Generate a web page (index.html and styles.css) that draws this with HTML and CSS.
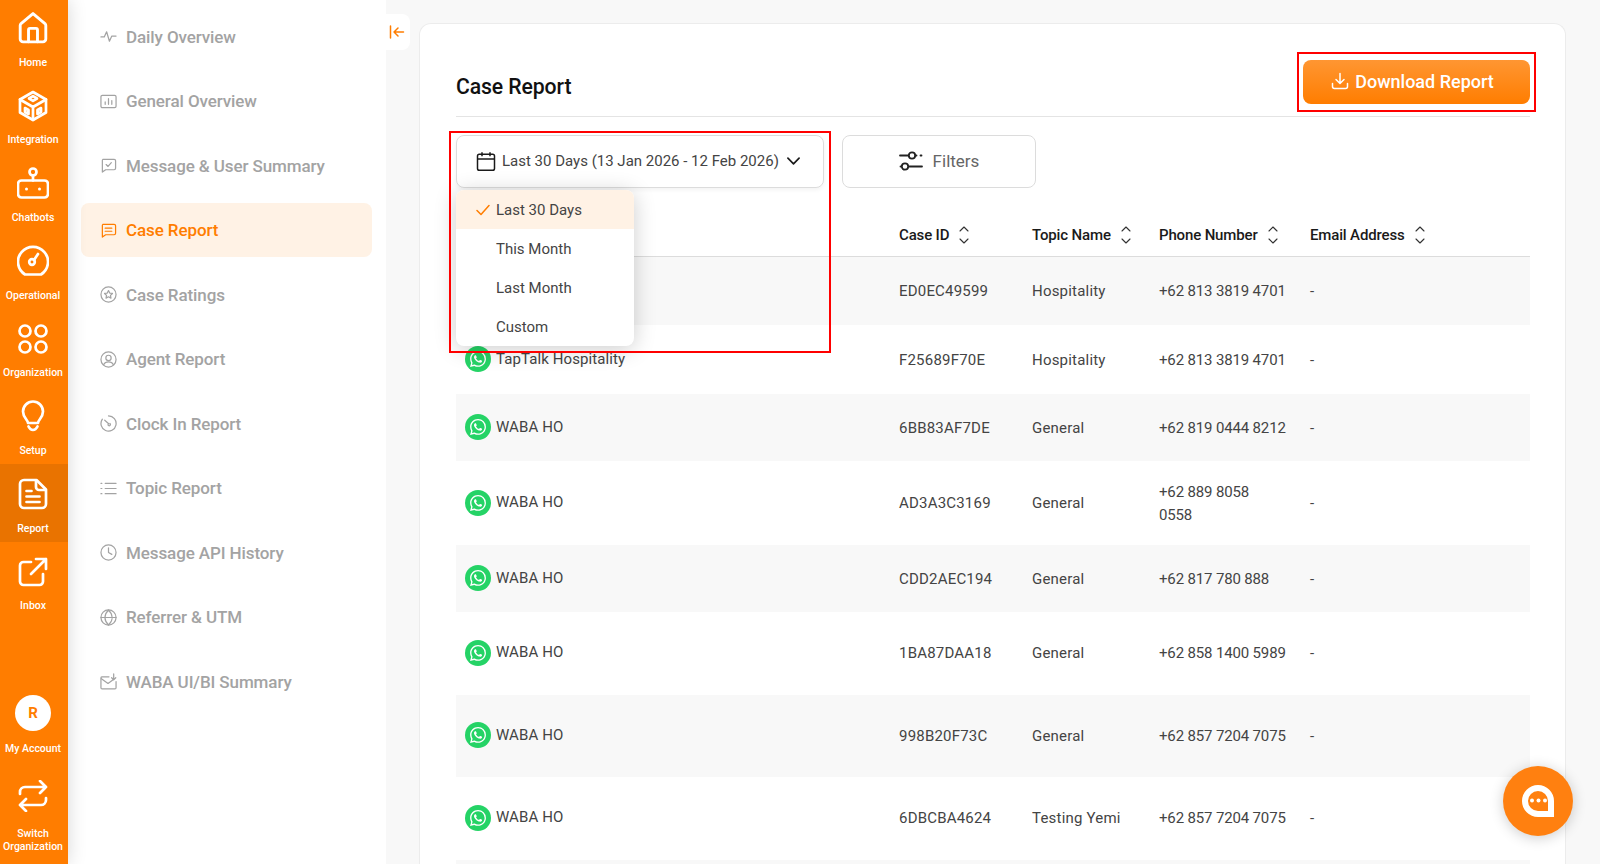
FILE: index.html
```html
<!DOCTYPE html>
<html lang="en">
<head>
<meta charset="utf-8">
<title>Case Report</title>
<link rel="stylesheet" href="styles.css">
</head>
<body>
<svg class="defs" width="0" height="0" aria-hidden="true">
  <defs>
    <symbol id="wa" viewBox="0 0 24 24"><path d="M17.472 14.382c-.297-.149-1.758-.867-2.03-.967-.273-.099-.471-.148-.67.15-.197.297-.767.966-.94 1.164-.173.199-.347.223-.644.075-.297-.15-1.255-.463-2.39-1.475-.883-.788-1.48-1.761-1.653-2.059-.173-.297-.018-.458.13-.606.134-.133.298-.347.446-.52.149-.174.198-.298.298-.497.099-.198.05-.371-.025-.52-.075-.149-.669-1.612-.916-2.207-.242-.579-.487-.5-.669-.51-.173-.008-.371-.01-.57-.01-.198 0-.52.074-.792.372-.272.297-1.04 1.016-1.04 2.479 0 1.462 1.065 2.875 1.213 3.074.149.198 2.096 3.2 5.077 4.487.709.306 1.262.489 1.694.625.712.227 1.36.195 1.871.118.571-.085 1.758-.719 2.006-1.413.248-.694.248-1.289.173-1.413-.074-.124-.272-.198-.57-.347m-5.421 7.403h-.004a9.87 9.87 0 01-5.031-1.378l-.361-.214-3.741.982.998-3.648-.235-.374a9.86 9.86 0 01-1.51-5.26c.001-5.45 4.436-9.884 9.888-9.884 2.64 0 5.122 1.03 6.988 2.898a9.825 9.825 0 012.893 6.994c-.003 5.45-4.437 9.884-9.885 9.884m8.413-18.297A11.815 11.815 0 0012.05 0C5.495 0 .16 5.335.157 11.892c0 2.096.547 4.142 1.588 5.945L.057 24l6.305-1.654a11.882 11.882 0 005.683 1.448h.005c6.554 0 11.89-5.335 11.893-11.893a11.821 11.821 0 00-3.48-8.413z"/></symbol>
    <symbol id="sort" viewBox="0 0 10 20"><path d="M1 6l4-4 4 4M1 14l4 4 4-4"/></symbol>
  </defs>
</svg>

<nav class="rail">
  <div class="rail-top">
    <a class="rail-item"><svg class="rail-icon" viewBox="2 1 28 30"><path d="M4.800 11.800 16 2.500l11.200 9.300c.5.500.8 1.200.8 1.900v12.600c0 1.500-1.200 2.700-2.700 2.700H6.700C5.200 29 4 27.800 4 26.300V13.700c0-.7.300-1.400.8-1.900Z"/><path d="M11.800 29V17.800c0-.8.600-1.400 1.400-1.400h5.600c.8 0 1.400.6 1.400 1.400V29"/></svg><span class="rail-label">Home</span></a>
    <a class="rail-item"><svg class="rail-icon" viewBox="0 0 32 32"><path d="M16 2 29 9.500v13L16 30 3 22.500v-13Z"/><path d="m12 8.500 4-2.300 4 2.300-4 2.300Zm-9 1L16 17l13-7.500M16 17v13M8 18l3.500 2v4l-3.500-2Zm16 0-3.500 2v4l3.500-2Z"/></svg><span class="rail-label">Integration</span></a>
    <a class="rail-item"><svg class="rail-icon" viewBox="0 0 32 32"><circle cx="16" cy="5" r="3.500"/><path d="M16 8.500v5"/><rect x="1" y="13.500" width="30" height="17" rx="3.500"/><circle class="solid" cx="9.500" cy="22" r="1.500"/><circle class="solid" cx="22.500" cy="22" r="1.500"/></svg><span class="rail-label">Chatbots</span></a>
    <a class="rail-item"><svg class="rail-icon" viewBox="0 0 32 32"><path d="M8 29.500a15 15 0 1 1 16 0Z"/><circle cx="15" cy="17" r="2.800"/><path d="m17 15 4-6"/></svg><span class="rail-label">Operational</span></a>
    <a class="rail-item"><svg class="rail-icon" viewBox="0 0 32 32"><circle cx="8" cy="8" r="5.500"/><circle cx="24" cy="8" r="5.500"/><circle cx="8" cy="24" r="5.500"/><circle cx="24" cy="24" r="5.500"/></svg><span class="rail-label">Organization</span></a>
    <a class="rail-item"><svg class="rail-icon" viewBox="0 0 32 32"><path d="M11 23c0-3-5-5.500-5-11.500a10 10 0 0 1 20 0C26 17.500 21 20 21 23Z"/><path d="M11.500 26.500c1 2 2.500 3.500 4.500 3.500s3.500-1.500 4.500-3.500"/></svg><span class="rail-label">Setup</span></a>
    <a class="rail-item is-current"><svg class="rail-icon" viewBox="0 0 32 32"><path d="M7 2h12.500L29 11.500V26a4 4 0 0 1-4 4H7a4 4 0 0 1-4-4V6a4 4 0 0 1 4-4Z"/><path d="M19 3v6a3 3 0 0 0 3 3h6M9.500 13h5M9.500 18.500h13M9.500 24h13"/></svg><span class="rail-label">Report</span></a>
    <a class="rail-item"><svg class="rail-icon" viewBox="0 0 32 32"><path d="M14 6H6.500A3.500 3.500 0 0 0 3 9.500v16A3.500 3.500 0 0 0 6.500 29h16a3.500 3.500 0 0 0 3.500-3.500V18"/><path d="M14 18 29 3M19 3h10v10"/></svg><span class="rail-label">Inbox</span></a>
  </div>
  <div class="rail-bottom">
    <a class="rail-account"><span class="avatar">R</span><span class="rail-label">My Account</span></a>
    <a class="rail-switch"><svg class="rail-icon" viewBox="0 0 32 32"><path d="M3 14v-2a5 5 0 0 1 5-5h21M23 1l6 6-6 6M29 18v2a5 5 0 0 1-5 5H3M9 31l-6-6 6-6"/></svg><span class="rail-label">Switch<br>Organization</span></a>
  </div>
</nav>

<aside class="panel">
  <button class="panel-toggle" aria-label="Collapse"><svg viewBox="0 0 16 16"><path d="M1.500 2v12M14.500 8H5M9 4 5 8l4 4"/></svg></button>
  <a class="menu-item"><svg class="menu-icon" viewBox="0 0 18 18"><path d="M1 9.500h3.500L7 4l3 10 2.500-5.500H17"/></svg>Daily Overview</a>
  <a class="menu-item"><svg class="menu-icon" viewBox="0 0 18 18"><rect x="1" y="2.500" width="16" height="13" rx="1.500"/><path d="M5.500 12V9.500M9 12V6M12.500 12V8"/></svg>General Overview</a>
  <a class="menu-item"><svg class="menu-icon" viewBox="0 0 18 18"><path d="M3 2.500h12a1.500 1.500 0 0 1 1.500 1.500v8a1.500 1.500 0 0 1-1.500 1.500H6L2.500 16V4A1.500 1.500 0 0 1 3 2.500Z"/><path d="m6.500 8 2 2 3.500-4"/></svg>Message &amp; User Summary</a>
  <a class="menu-item is-active"><svg class="menu-icon" viewBox="0 0 18 18"><path d="M3 2.500h12a1.500 1.500 0 0 1 1.500 1.500v8a1.500 1.500 0 0 1-1.500 1.500H6L2.500 16V4A1.500 1.500 0 0 1 3 2.500Z"/><path d="M5.500 6.500h7M5.500 9.800h7"/></svg>Case Report</a>
  <a class="menu-item"><svg class="menu-icon" viewBox="0 0 18 18"><circle cx="9" cy="9" r="8"/><path d="m9 4.800 1.300 2.700 2.900.4-2.100 2 .5 2.900L9 11.400l-2.600 1.400.5-2.900-2.100-2 2.900-.4Z"/></svg>Case Ratings</a>
  <a class="menu-item"><svg class="menu-icon" viewBox="0 0 18 18"><circle cx="9" cy="9" r="8"/><circle cx="9" cy="7.300" r="2.800"/><path d="M3.800 14.500c1-2 3-3 5.200-3s4.200 1 5.200 3"/></svg>Agent Report</a>
  <a class="menu-item"><svg class="menu-icon" viewBox="0 0 18 18"><path d="M9 1a8 8 0 1 1-6.500 3.400"/><path d="m5 5.500 4.500 4"/><path d="M10.500 9a1.300 1.300 0 1 1-2 .8"/></svg>Clock In Report</a>
  <a class="menu-item"><svg class="menu-icon" viewBox="0 0 18 18"><path d="M5.500 3.500H17M5.500 9H17M5.500 14.500H17M1 3.500h1M1 9h1M1 14.500h1"/></svg>Topic Report</a>
  <a class="menu-item"><svg class="menu-icon" viewBox="0 0 18 18"><circle cx="9" cy="9" r="8"/><path d="M9 4v5l3.500 2"/></svg>Message API History</a>
  <a class="menu-item"><svg class="menu-icon" viewBox="0 0 18 18"><circle cx="9" cy="9" r="8"/><path d="M1 9h16M9 1c-5 5-5 11 0 16M9 1c5 5 5 11 0 16"/></svg>Referrer &amp; UTM</a>
  <a class="menu-item"><svg class="menu-icon" viewBox="0 0 18 18"><path d="M9.500 4H2a1.200 1.200 0 0 0-1 1.200V15.500A1.200 1.200 0 0 0 2.200 16.700h13.600a1.200 1.200 0 0 0 1.200-1.200V9"/><path d="m1.500 6 7 5 5-3.500M14.500 1v6M12.300 5l2.200 2.200L16.700 5"/></svg>WABA UI/BI Summary</a>
</aside>

<main class="main">
  <section class="card">
    <header class="card-head">
      <h1 class="card-title">Case Report</h1>
      <div class="marked marked-btn">
        <button class="btn-download"><svg class="btn-icon" viewBox="0 0 18 18"><path d="M9 1.500v9.500M5 7.500 9 11.500l4-4M1.500 11.500v3a2 2 0 0 0 2 2h11a2 2 0 0 0 2-2v-3"/></svg>Download Report</button>
      </div>
    </header>

    <div class="filters">
      <div class="date-wrap">
        <button class="date-btn"><svg class="date-icon" viewBox="0 0 20 20"><rect x="1.500" y="2.800" width="17" height="16" rx="1.800"/><path d="M1.500 7.500h17M6 .8v4M14 .8v4"/></svg>Last 30 Days (13 Jan 2026 - 12 Feb 2026)<svg class="date-caret" viewBox="0 0 14 8"><path d="m1 1 6 6 6-6"/></svg></button>
        <ul class="dropdown">
          <li class="dd-item is-selected"><svg class="dd-check" viewBox="0 0 14 12"><path d="m1 6.500 4 4 8-9"/></svg>Last 30 Days</li>
          <li class="dd-item">This Month</li>
          <li class="dd-item">Last Month</li>
          <li class="dd-item">Custom</li>
        </ul>
        <span class="marked-box"></span>
      </div>
      <button class="filter-btn"><svg class="filter-icon" viewBox="0 0 24 22"><path d="M1 5.500h8.500M16.500 5.500h1M21.500 5.500h1M1.500 16.500h0M10 16.500h13"/><circle cx="13" cy="5.500" r="3.200"/><circle cx="6" cy="16.500" r="3.200"/></svg>Filters</button>
    </div>

    <table class="table">
      <colgroup><col class="c-name"><col class="c-case"><col class="c-topic"><col class="c-phone"><col class="c-email"></colgroup>
      <thead>
        <tr>
          <th></th>
          <th><span class="th-in">Case ID<svg class="sort"><use href="#sort"/></svg></span></th>
          <th><span class="th-in">Topic Name<svg class="sort"><use href="#sort"/></svg></span></th>
          <th><span class="th-in">Phone Number<svg class="sort"><use href="#sort"/></svg></span></th>
          <th><span class="th-in">Email Address<svg class="sort"><use href="#sort"/></svg></span></th>
        </tr>
      </thead>
      <tbody>
        <tr class="r-a alt"><td></td><td>ED0EC49599</td><td>Hospitality</td><td>+62 813 3819 4701</td><td>-</td></tr>
        <tr class="r-b"><td><div class="chan"><span class="wa"><svg><use href="#wa"/></svg></span><span>TapTalk Hospitality</span></div></td><td>F25689F70E</td><td>Hospitality</td><td>+62 813 3819 4701</td><td>-</td></tr>
        <tr class="r-c alt"><td><div class="chan"><span class="wa"><svg><use href="#wa"/></svg></span><span>WABA HO</span></div></td><td>6BB83AF7DE</td><td>General</td><td>+62 819 0444 8212</td><td>-</td></tr>
        <tr class="r-d"><td><div class="chan"><span class="wa"><svg><use href="#wa"/></svg></span><span>WABA HO</span></div></td><td>AD3A3C3169</td><td>General</td><td>+62 889 8058<br>0558</td><td>-</td></tr>
        <tr class="r-c alt"><td><div class="chan"><span class="wa"><svg><use href="#wa"/></svg></span><span>WABA HO</span></div></td><td>CDD2AEC194</td><td>General</td><td>+62 817 780 888</td><td>-</td></tr>
        <tr class="r-e"><td><div class="chan"><span class="wa"><svg><use href="#wa"/></svg></span><span>WABA HO</span></div></td><td>1BA87DAA18</td><td>General</td><td>+62 858 1400 5989</td><td>-</td></tr>
        <tr class="r-e alt"><td><div class="chan"><span class="wa"><svg><use href="#wa"/></svg></span><span>WABA HO</span></div></td><td>998B20F73C</td><td>General</td><td>+62 857 7204 7075</td><td>-</td></tr>
        <tr class="r-e"><td><div class="chan"><span class="wa"><svg><use href="#wa"/></svg></span><span>WABA HO</span></div></td><td>6DBCBA4624</td><td>Testing Yemi</td><td>+62 857 7204 7075</td><td>-</td></tr>
        <tr class="r-e alt"><td></td><td></td><td></td><td></td><td></td></tr>
      </tbody>
    </table>
  </section>
</main>

<button class="fab" aria-label="Chat"><svg viewBox="0 0 34 34"><path fill-rule="evenodd" d="M17 1a16 16 0 0 1 16 16v16H17A16 16 0 0 1 17 1Zm0 6a10 10 0 0 0 0 20h10V17A10 10 0 0 0 17 7Z"/><circle cx="11" cy="16.500" r="2"/><circle cx="17.500" cy="16.500" r="2"/><circle cx="24" cy="16.500" r="2"/></svg></button>
</body>
</html>
```
FILE: styles.css
```css
* { box-sizing: border-box; }
html, body { height: 100%; }
body {
  margin: 0;
  display: flex;
  height: 864px;
  overflow: hidden;
  background: #f8f8f8;
  font-family: Roboto, "Liberation Sans", sans-serif;
  color: #1f1f1f;
}
button { font-family: inherit; cursor: pointer; }
.defs { position: absolute; }

/* primary rail */
.rail {
  flex: 0 0 68px;
  height: 864px;
  background: #ff7d00;
  display: flex;
  flex-direction: column;
  justify-content: space-between;
  box-shadow: 0 0 18px rgba(0, 0, 0, .16);
  z-index: 3;
  color: #fff;
}
.rail-top { margin-top: -2px; }
.rail-item {
  height: 77.7px;
  padding: 14px 2px 0 0;
  display: flex;
  flex-direction: column;
  align-items: center;
}
.rail-item.is-current { background: #e97300; }
.rail-icon {
  width: 32px;
  height: 32px;
  fill: none;
  stroke: #fff;
  stroke-width: 2.700;
  stroke-linecap: round;
  stroke-linejoin: round;
  flex: none;
}
.rail-icon .solid { fill: #fff; stroke: none; }
.rail-label {
  margin-top: 11.500px;
  font-size: 10.500px;
  line-height: 13px;
  font-weight: 500;
  text-align: center;
  white-space: nowrap;
}
.rail-bottom { padding-bottom: 11px; display: flex; flex-direction: column; align-items: center; padding-right: 2px; }
.rail-account, .rail-switch { display: flex; flex-direction: column; align-items: center; }
.rail-account .rail-label { margin-top: 11px; }
.rail-switch { margin-top: 25px; }
.rail-switch .rail-label { margin-top: 15px; }
.avatar {
  width: 36px;
  height: 36px;
  border-radius: 50%;
  background: #fff;
  color: #ff7d00;
  font-size: 15px;
  font-weight: 700;
  display: flex;
  align-items: center;
  justify-content: center;
}

/* secondary panel */
.panel {
  flex: 0 0 318px;
  height: 864px;
  background: #fff;
  padding: 9.500px 14px 0 13px;
  display: flex;
  flex-direction: column;
  gap: 10.500px;
  position: relative;
  z-index: 2;
}
.menu-item {
  height: 54px;
  flex: none;
  padding-left: 19px;
  border-radius: 8px;
  display: flex;
  align-items: center;
  gap: 9px;
  font-size: 17px;
  letter-spacing: -.1px;
  font-weight: 500;
  color: #a3a3a3;
}
.menu-icon {
  width: 17px;
  height: 17px;
  fill: none;
  stroke: #a3a3a3;
  stroke-width: 1.300;
  stroke-linecap: round;
  stroke-linejoin: round;
  flex: none;
}
.menu-item.is-active { background: #fff2e5; color: #ff7d00; }
.menu-item.is-active .menu-icon { stroke: #ff7d00; }
.panel-toggle {
  position: absolute;
  left: 100%;
  top: 14px;
  width: 24px;
  height: 36px;
  padding: 0 0 0 3px;
  border: 0;
  border-radius: 0 8px 8px 0;
  background: #fff;
  display: flex;
  align-items: center;
}
.panel-toggle svg {
  width: 16px;
  height: 16px;
  fill: none;
  stroke: #ff7d00;
  stroke-width: 1.500;
  stroke-linecap: round;
  stroke-linejoin: round;
}

/* main */
.main {
  flex: 1;
  min-width: 0;
  padding: 23px 34px 0 33px;
  height: 864px;
}
.card {
  height: 841px;
  overflow: hidden;
  background: #fff;
  border: 1px solid #ececec;
  border-bottom: 0;
  border-radius: 12px 12px 0 0;
  padding: 36px 35px 0 36px;
}
.card-head {
  display: flex;
  align-items: flex-end;
  justify-content: space-between;
  height: 57px;
  padding-bottom: 12px;
  border-bottom: 1px solid #e4e4e4;
}
.card-title {
  margin: 0 0 2px;
  font-size: 21.200px;
  letter-spacing: -.1px;
  line-height: 30px;
  font-weight: 500;
  color: #111;
}
.marked { position: relative; }
.marked-btn::after {
  content: "";
  position: absolute;
  inset: -8px -6px -8px -6px;
  border: 2px solid #f00;
  pointer-events: none;
}
.btn-download {
  width: 227px;
  height: 44px;
  padding: 0 8px 2px 0;
  border: 0;
  border-radius: 8px;
  background: linear-gradient(#ff9632, #ff7d00);
  color: #fff;
  font-size: 18px;
  font-weight: 500;
  display: flex;
  align-items: center;
  justify-content: center;
  gap: 6px;
}
.btn-icon {
  width: 18px;
  height: 18px;
  fill: none;
  stroke: #fff;
  stroke-width: 1.500;
  stroke-linecap: round;
  stroke-linejoin: round;
}

.filters {
  display: flex;
  gap: 18px;
  margin-top: 18px;
}
.date-wrap { position: relative; }
.date-btn, .filter-btn {
  height: 53px;
  padding-bottom: 2px;
  background: #fff;
  border: 1px solid #dcdcdc;
  border-radius: 8px;
  display: flex;
  align-items: center;
  font-size: 15px;
  color: #444;
}
.date-btn {
  width: 368px;
  padding-left: 19px;
  padding-right: 0;
  gap: 6px;
  box-shadow: 0 2px 4px rgba(0, 0, 0, .05);
}
.date-icon {
  width: 20px;
  height: 21px;
  fill: none;
  stroke: #1a1a1a;
  stroke-width: 1.500;
  flex: none;
}
.date-caret {
  width: 13px;
  height: 8px;
  margin-left: 2px;
  fill: none;
  stroke: #1a1a1a;
  stroke-width: 1.800;
  stroke-linecap: round;
  stroke-linejoin: round;
}
.filter-btn {
  width: 194px;
  justify-content: center;
  gap: 10px;
  font-size: 17px;
  color: #666;
}
.filter-icon {
  width: 24px;
  height: 22px;
  fill: none;
  stroke: #222;
  stroke-width: 1.800;
  stroke-linecap: round;
}
.dropdown {
  position: absolute;
  left: 0;
  top: 55px;
  width: 178px;
  margin: 0;
  padding: 0;
  list-style: none;
  background: #fff;
  border-radius: 8px;
  box-shadow: 0 3px 22px rgba(0, 0, 0, .2);
  overflow: hidden;
  z-index: 2;
}
.dd-item {
  height: 39px;
  padding-left: 40px;
  display: flex;
  align-items: center;
  font-size: 15px;
  color: #444;
  position: relative;
}
.dd-item.is-selected { background: #fff2e5; }
.dd-check {
  position: absolute;
  left: 20px;
  top: 14px;
  width: 14px;
  height: 12px;
  fill: none;
  stroke: #ff7d00;
  stroke-width: 1.500;
  stroke-linecap: round;
  stroke-linejoin: round;
}
.marked-box {
  position: absolute;
  left: -7px;
  top: -4px;
  width: 382px;
  height: 222px;
  border: 2px solid #f00;
  pointer-events: none;
  z-index: 3;
}

/* table */
.table {
  width: 1074px;
  margin-top: 26px;
  border-collapse: collapse;
  table-layout: fixed;
  font-size: 15px;
  color: #444;
}
.c-name { width: 434px; }
.c-case { width: 133px; }
.c-topic { width: 127px; }
.c-phone { width: 151px; }
.c-email { width: 229px; }
th {
  height: 42px;
  padding: 0 9px;
  text-align: left;
  font-size: 15px;
  letter-spacing: -.15px;
  font-weight: 500;
  color: #1a1a1a;
  border-bottom: 1px solid #dcdcdc;
  white-space: nowrap;
}
.th-in { display: flex; align-items: center; gap: 10px; }
.sort {
  width: 10px;
  height: 20px;
  fill: none;
  stroke: #333;
  stroke-width: 1.100;
  stroke-linecap: round;
  stroke-linejoin: round;
  flex: none;
}
td { padding: 1px 9px 0; line-height: 23px; vertical-align: middle; }
td:nth-child(1) { letter-spacing: .1px; }
td:nth-child(2) { letter-spacing: .2px; }
td:nth-child(3) { letter-spacing: .2px; }
td:nth-child(4) { letter-spacing: -.15px; }
.alt td { background: #f8f8f8; }
.r-a td { height: 69px; }
.r-b td { height: 69px; }
.r-c td { height: 67px; }
.r-d td { height: 84px; }
.r-e td { height: 82.500px; }
.chan { display: flex; align-items: center; gap: 5px; margin-bottom: 2px; }
.wa {
  width: 26px;
  height: 26px;
  border-radius: 50%;
  background: #25d366;
  display: flex;
  align-items: center;
  justify-content: center;
  flex: none;
}
.wa svg { width: 16px; height: 16px; fill: #fff; }

.fab {
  position: fixed;
  left: 1503px;
  top: 766px;
  width: 70px;
  height: 70px;
  padding: 0;
  border: 0;
  border-radius: 50%;
  background: #ff8010;
  box-shadow: 0 2px 14px rgba(0, 0, 0, .2);
  display: flex;
  align-items: center;
  justify-content: center;
  z-index: 5;
}
.fab svg { width: 34px; height: 34px; fill: #fff; }
```
